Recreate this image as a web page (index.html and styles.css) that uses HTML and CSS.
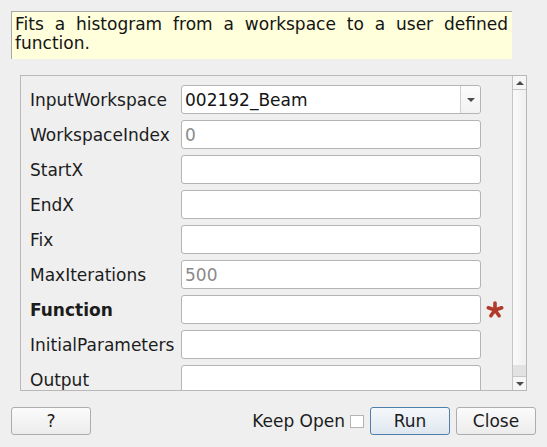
FILE: index.html
```html
<!DOCTYPE html>
<html>
<head>
<meta charset="utf-8">
<link rel="stylesheet" href="styles.css">
</head>
<body>
<div class="dialog">
  <div class="desc">Fits a histogram from a workspace to a user defined function.</div>
  <div class="panel">
    <div class="content">
      <div class="form">
        <label class="lbl">InputWorkspace</label>
        <div class="combo"><span class="val">002192_Beam</span><span class="drop"><span class="tri-down"></span></span></div>
        <span></span>

        <label class="lbl">WorkspaceIndex</label>
        <div class="field"><span class="ph">0</span></div>
        <span></span>

        <label class="lbl">StartX</label>
        <div class="field"></div>
        <span></span>

        <label class="lbl">EndX</label>
        <div class="field"></div>
        <span></span>

        <label class="lbl">Fix</label>
        <div class="field"></div>
        <span></span>

        <label class="lbl">MaxIterations</label>
        <div class="field"><span class="ph">500</span></div>
        <span></span>

        <label class="lbl bold">Function</label>
        <div class="field"></div>
        <span class="star"><svg width="18" height="18" viewBox="0 0 18 18"><g stroke="#b23a2c" stroke-width="3.6" stroke-linecap="round"><line x1="9" y1="9" x2="9" y2="2"/><line x1="9" y1="9" x2="15.7" y2="6.8"/><line x1="9" y1="9" x2="13.1" y2="14.7"/><line x1="9" y1="9" x2="4.9" y2="14.7"/><line x1="9" y1="9" x2="2.3" y2="6.8"/></g></svg></span>

        <label class="lbl">InitialParameters</label>
        <div class="field"></div>
        <span></span>

        <label class="lbl">Output</label>
        <div class="field"></div>
        <span></span>
      </div>
    </div>
    <div class="scrollbar">
      <div class="sb-btn top"><span class="tri-up"></span></div>
      <div class="sb-handle"></div>
      <div class="sb-track"></div>
      <div class="sb-btn bottom"><span class="tri-down"></span></div>
    </div>
  </div>
  <div class="actions">
    <button class="btn">?</button>
    <div class="spacer"></div>
    <span class="keep">Keep Open</span>
    <span class="check"></span>
    <button class="btn run">Run</button>
    <button class="btn close">Close</button>
  </div>
</div>
</body>
</html>
```
FILE: styles.css
```css
html, body {
  margin: 0;
  padding: 0;
  background: #efefef;
}
body {
  font-family: "DejaVu Sans", "Liberation Sans", sans-serif;
  font-size: 17px;
  color: #1c1c1c;
  width: 547px;
  height: 447px;
  overflow: hidden;
}
.dialog {
  display: flex;
  flex-direction: column;
}
.desc {
  margin: 11px 0 0 11px;
  width: 501px;
  height: 48px;
  box-sizing: border-box;
  background: #ffffdc;
  border-top: 1px solid #a8a8a8;
  border-left: 1px solid #a8a8a8;
  padding: 3px 4px 0 3px;
  text-align: justify;
  line-height: 19px;
  color: #141414;
  overflow: hidden;
}
.panel {
  margin: 16px 0 0 20px;
  width: 507px;
  height: 316px;
  box-sizing: border-box;
  border: 1px solid #b8b8b8;
  display: flex;
  overflow: hidden;
}
.content {
  flex: 1;
  overflow: hidden;
  padding: 9px 0 0 9px;
}
.form {
  display: grid;
  grid-template-columns: 147px 300px 22px;
  grid-auto-rows: 29px;
  column-gap: 4px;
  row-gap: 6px;
  align-items: center;
}
.lbl {
  white-space: nowrap;
  color: #1c1c1c;
}
.bold {
  font-weight: bold;
}
.field, .combo {
  height: 29px;
  box-sizing: border-box;
  border: 1px solid #b4b4b4;
  border-radius: 3px;
  background: #fff;
  display: flex;
  align-items: center;
  padding-left: 3px;
}
.ph {
  color: #8a8a8a;
}
.combo {
  padding-left: 0;
}
.combo .val {
  flex: 1;
  padding-left: 3px;
  color: #141414;
}
.drop {
  width: 19px;
  height: 100%;
  border-left: 1px solid #cfcfcf;
  display: flex;
  align-items: center;
  justify-content: center;
  background: linear-gradient(#fcfcfc, #f2f2f2);
  border-radius: 0 3px 3px 0;
}
.tri-down {
  width: 0;
  height: 0;
  border-left: 4px solid transparent;
  border-right: 4px solid transparent;
  border-top: 4px solid #4a4a4a;
}
.tri-up {
  width: 0;
  height: 0;
  border-left: 4px solid transparent;
  border-right: 4px solid transparent;
  border-bottom: 4px solid #4a4a4a;
}
.star {
  display: flex;
  align-items: center;
  padding-left: 1px;
}
.scrollbar {
  width: 13px;
  border-left: 1px solid #c4c4c4;
  display: flex;
  flex-direction: column;
}
.sb-btn {
  height: 13px;
  display: flex;
  align-items: center;
  justify-content: center;
  background: #f6f6f6;
}
.sb-btn.top {
  border-bottom: 1px solid #c8c8c8;
}
.sb-btn.bottom {
  border-top: 1px solid #c8c8c8;
  height: 13px;
}
.sb-handle {
  flex: 1;
  background: linear-gradient(to right, #fafafa, #f0f0f0);
}
.sb-track {
  height: 11px;
  background: #e2e2e2;
}
.actions {
  display: flex;
  align-items: center;
  margin-top: 16px;
  padding: 0 11px;
}
.btn {
  width: 80px;
  height: 28px;
  box-sizing: border-box;
  border: 1px solid #adadad;
  border-radius: 3px;
  background: linear-gradient(#fbfbfb, #ececec);
  font-family: "DejaVu Sans", "Liberation Sans", sans-serif;
  font-size: 17px;
  color: #1c1c1c;
  padding: 0;
}
.spacer {
  flex: 1;
}
.keep {
  color: #1c1c1c;
}
.check {
  width: 14px;
  height: 13px;
  box-sizing: border-box;
  border: 1px solid #b4b4b4;
  background: #fff;
  margin-left: 5px;
}
.run {
  margin-left: 6px;
  border-color: #4f80ad;
  background: linear-gradient(#f5f8fb, #dfe7ef);
}
.close {
  margin-left: 6px;
}
```
